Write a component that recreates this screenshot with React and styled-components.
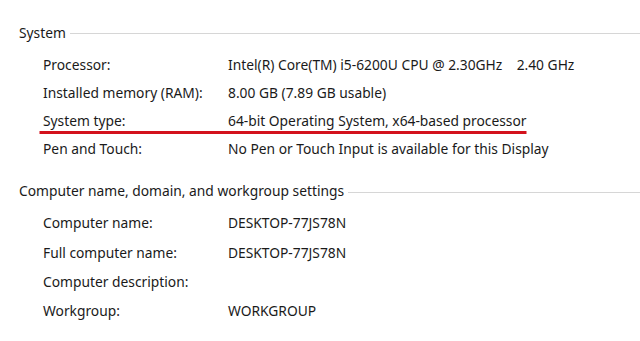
import React from 'react';
import styled, { createGlobalStyle } from 'styled-components';

const Global = createGlobalStyle`
  html, body {
    margin: 0;
    padding: 0;
    background: #ffffff;
  }
  body {
    font-family: "Noto Sans", "Open Sans", sans-serif;
    font-size: 13.8px;
    color: #1a1a1a;
  }
`

const Page = styled.div`
  width: 640px;
  height: 341px;
  overflow: hidden;
  padding-top: 22px;
  box-sizing: border-box;
`

const Section = styled.section`
  margin-bottom: ${p => p.gap || 0}px;
`

const Legend = styled.div`
  display: flex;
  align-items: center;
  gap: 4px;
  padding-left: 19px;
  height: 20px;
  &::after {
    content: '';
    flex: 1;
    height: 1px;
    background: #d6d6d6;
    margin-top: 3px;
  }
`

const Rows = styled.div`
  display: flex;
  flex-direction: column;
  padding: ${p => p.top}px 0 0 43px;
  gap: ${p => p.step}px;
`

const Row = styled.div`
  display: grid;
  grid-template-columns: 185px auto;
  width: max-content;
  height: 20px;
  align-items: center;
  white-space: pre;
  ${p => p.marked && `
    margin-left: -4px;
    padding-left: 4px;
    padding-right: 1px;
    box-shadow: 0 3.5px 0 -0.5px #d3121c;
  `}
`

const Label = styled.span``
const Value = styled.span``

const system = [
  ['Processor:', 'Intel(R) Core(TM) i5-6200U CPU @ 2.30GHz    2.40 GHz'],
  ['Installed memory (RAM):', '8.00 GB (7.89 GB usable)'],
  ['System type:', '64-bit Operating System, x64-based processor', true],
  ['Pen and Touch:', 'No Pen or Touch Input is available for this Display'],
]

const computer = [
  ['Computer name:', 'DESKTOP-77JS78N'],
  ['Full computer name:', 'DESKTOP-77JS78N'],
  ['Computer description:', ''],
  ['Workgroup:', 'WORKGROUP'],
]

export default function App() {
  return (
    <Page>
      <Global />
      <Section gap={22}>
        <Legend>System</Legend>
        <Rows top={12} step={8.3}>
          {system.map(([k, v, m]) => (
            <Row key={k} marked={m}>
              <Label>{k}</Label>
              <Value>{v}</Value>
            </Row>
          ))}
        </Rows>
      </Section>
      <Section>
        <Legend>Computer name, domain, and workgroup settings</Legend>
        <Rows top={12} step={9.3}>
          {computer.map(([k, v]) => (
            <Row key={k}>
              <Label>{k}</Label>
              <Value>{v}</Value>
            </Row>
          ))}
        </Rows>
      </Section>
    </Page>
  );
}
